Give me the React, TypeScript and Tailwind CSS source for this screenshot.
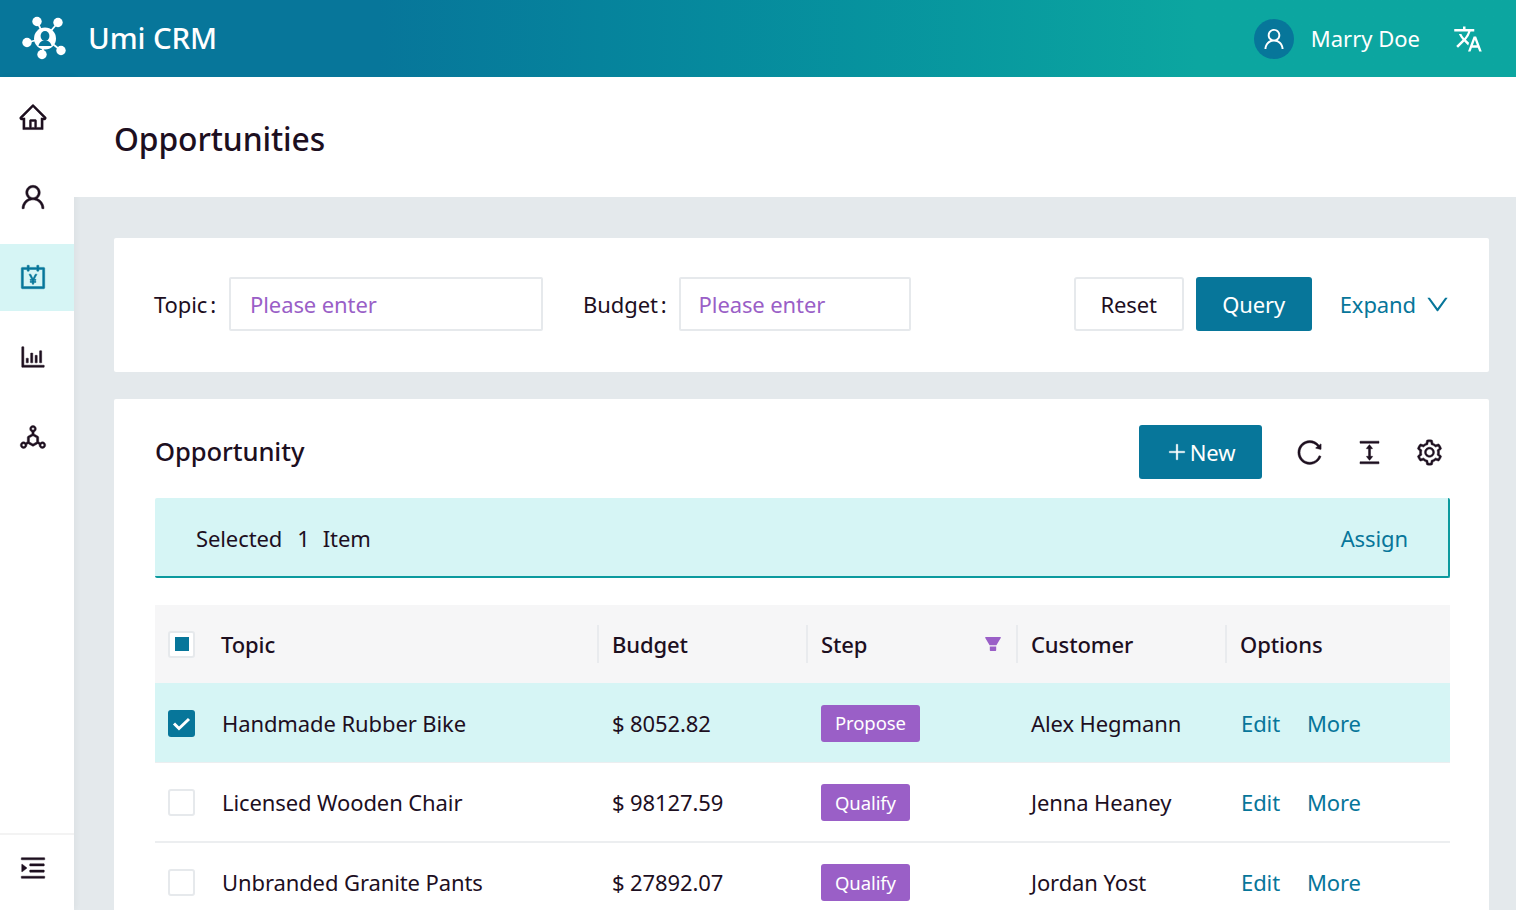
import React from "react";
import {
  AiOutlineHome, AiOutlineUser, AiOutlineAccountBook, AiOutlineBarChart, AiOutlineDeploymentUnit,
  AiOutlineMenuUnfold, AiOutlineReload, AiOutlineColumnHeight, AiOutlineSetting, AiFillFilter,
  AiOutlineDown, AiOutlinePlus,
} from "react-icons/ai";
import { MdTranslate } from "react-icons/md";

const font = { fontFamily: '"Noto Sans", "Open Sans", sans-serif' };

function Logo() {
  return (
    <svg width="46" height="46" viewBox="0 0 46 46" fill="white" stroke="white">
      <g strokeWidth="1.8">
        <line x1="23" y1="22" x2="15" y2="5.5" /><line x1="23" y1="22" x2="36" y2="6.5" />
        <line x1="23" y1="22" x2="5" y2="26.5" /><line x1="23" y1="22" x2="20" y2="38.5" />
        <line x1="23" y1="22" x2="39" y2="34.5" />
      </g>
      <circle cx="15" cy="5.5" r="4.7" stroke="none" /><circle cx="36" cy="6.5" r="4.7" stroke="none" />
      <circle cx="5" cy="26.5" r="4.7" stroke="none" /><circle cx="20" cy="38.5" r="4.7" stroke="none" />
      <circle cx="39" cy="34.5" r="4.7" stroke="none" />
      <circle cx="23" cy="22.5" r="11" stroke="none" />
      <ellipse cx="23" cy="20" rx="4.4" ry="5" fill="#07769a" stroke="none" />
      <path d="M16.5 30c.5-3.5 3-5.5 6.5-5.5s6 2 6.5 5.5z" fill="#07769a" stroke="none" />
    </svg>
  );
}

const rowGrid = "grid grid-cols-[53px_390px_209px_210px_209px_224px] items-center";
const headGrid = "grid grid-cols-[52px_390px_209px_210px_209px_225px] items-center";
const ink = { stroke: "currentColor", strokeWidth: 16 };

function Checkbox({ state }: { state: "none" | "some" | "all" }) {
  if (state === "all") {
    return (
      <span className="flex h-[27px] w-[27px] items-center justify-center rounded-[3px] bg-[#07769a]">
        <svg width="19" height="15" viewBox="0 0 19 15" fill="none" stroke="white" strokeWidth="3"><path d="M2 7.5l5 5L17 3" /></svg>
      </span>
    );
  }
  return (
    <span className="flex h-[27px] w-[27px] items-center justify-center rounded-[3px] border-2 border-[#e6e9ec] bg-white">
      {state === "some" && <span className="h-[14px] w-[14px] bg-[#07769a]" />}
    </span>
  );
}

const rows = [
  { topic: "Handmade Rubber Bike", budget: "$ 8052.82", step: "Propose", customer: "Alex Hegmann", selected: true },
  { topic: "Licensed Wooden Chair", budget: "$ 98127.59", step: "Qualify", customer: "Jenna Heaney", selected: false },
  { topic: "Unbranded Granite Pants", budget: "$ 27892.07", step: "Qualify", customer: "Jordan Yost", selected: false },
];

function Th({ label, icon }: { label: string; icon?: React.ReactNode }) {
  return (
    <div className="flex h-[38px] items-center justify-between border-l-2 border-[#e9ebee] pl-[13px] pr-[13px] font-medium text-[#1d0f1f]">
      <span>{label}</span>
      {icon}
    </div>
  );
}

function NavItem({ children, active }: { children: React.ReactNode; active?: boolean }) {
  return (
    <div className={active ? "flex h-[67px] items-center bg-[#d6f5f5] pb-[2px] pl-[18px] text-[#07769a]" : "flex h-[67px] items-center pb-[2px] pl-[18px] text-[#1d0f1f]"}>
      {children}
    </div>
  );
}

export default function App() {
  return (
    <div style={font} className="flex h-[910px] w-[1516px] flex-col overflow-hidden bg-[#e4e9ec] text-[22px] tracking-[-0.1px] text-[#1d0f1f]">
      <header className="flex h-[77px] shrink-0 items-center bg-gradient-to-r from-[#07769a] from-[25%] to-[#0ca6a0] to-[79%] pl-[22px] pr-[33px] text-white">
        <Logo />
        <span className="ml-[20px] pb-[2px] text-[29.5px] font-medium leading-none">Umi CRM</span>
        <span className="ml-auto flex h-[40px] w-[40px] items-center justify-center rounded-full bg-[#07769a]">
          <AiOutlineUser size={26} />
        </span>
        <span className="ml-[17px] tracking-normal">Marry Doe</span>
        <MdTranslate size={30} className="ml-[33px]" />
      </header>

      <div className="flex min-h-0 flex-1">
        <aside className="flex w-[74px] shrink-0 flex-col bg-white shadow-[2px_0_6px_rgba(0,0,0,0.04)]">
          <nav className="flex flex-col gap-[13px] pt-[7px]">
            <NavItem><AiOutlineHome size={30} {...ink} /></NavItem>
            <NavItem><AiOutlineUser size={30} {...ink} /></NavItem>
            <NavItem active><AiOutlineAccountBook size={30} {...ink} /></NavItem>
            <NavItem><AiOutlineBarChart size={30} {...ink} /></NavItem>
            <NavItem><AiOutlineDeploymentUnit size={30} {...ink} /></NavItem>
          </nav>
          <div className="mt-auto flex h-[77px] items-center border-t-2 border-[#f3f3f3] pb-[10px] pl-[18px]">
            <AiOutlineMenuUnfold size={30} {...ink} />
          </div>
        </aside>

        <main className="min-w-0 flex-1">
          <div className="flex h-[120px] items-center bg-white pl-[40px] pt-[3px] text-[31.8px] font-medium">Opportunities</div>

          <div className="pl-[40px] pr-[27px] pt-[41px]">
            <section className="flex h-[134px] items-center rounded-[2px] bg-white pb-[2px] pl-[40px] pr-[38px]">
              <span>Topic<span className="ml-[3px]">:</span></span>
              <div className="ml-[13px] flex h-[54px] w-[314px] items-center rounded-[2px] border-2 border-[#e6e9ec] pl-[19px] text-[#9a5fc7]">Please enter</div>
              <span className="ml-[40px]">Budget<span className="ml-[3px]">:</span></span>
              <div className="ml-[12px] flex h-[54px] w-[232px] items-center rounded-[2px] border-2 border-[#e6e9ec] pl-[18px] text-[#9a5fc7]">Please enter</div>
              <div className="ml-auto flex h-[54px] w-[110px] items-center justify-center rounded-[3px] border-2 border-[#e6e9ec]">Reset</div>
              <div className="ml-[12px] flex h-[54px] w-[116px] items-center justify-center rounded-[3px] bg-[#07769a] text-white">Query</div>
              <span className="ml-[28px] text-[#07769a]">Expand</span>
              <AiOutlineDown size={27} className="ml-[8px] text-[#07769a]" />
            </section>

            <section className="mt-[27px] rounded-t-[2px] bg-white pl-[41px] pr-[39px]">
              <div className="flex h-[99px] items-center pt-[6px]">
                <span className="pt-[2px] text-[25.6px] font-medium">Opportunity</span>
                <div className="ml-auto flex h-[54px] w-[123px] items-center justify-center gap-[2px] rounded-[3px] bg-[#07769a] text-white">
                  <AiOutlinePlus size={22} {...ink} /><span className="pt-[1px]">New</span>
                </div>
                <AiOutlineReload size={29} className="ml-[33px] mt-[1px]" {...ink} />
                <AiOutlineColumnHeight size={29} className="ml-[31px] mt-[1px]" {...ink} />
                <AiOutlineSetting size={29} className="ml-[31px] mr-[6px] mt-[1px]" {...ink} />
              </div>

              <div className="flex h-[80px] items-center rounded-[2px] border-b-2 border-r-2 border-[#0c9a9e] bg-[#d6f5f5] pl-[41px] pr-[40px] pt-[3px]">
                <span>Selected</span>
                <span className="ml-[15px]">1</span>
                <span className="ml-[13px]">Item</span>
                <span className="ml-auto text-[#07769a]">Assign</span>
              </div>

              <div className={`${headGrid} mt-[27px] h-[78px] bg-[#f6f6f7]`}>
                <div className="pl-[13px]"><Checkbox state="some" /></div>
                <div className="pl-[14px] font-medium">Topic</div>
                <Th label="Budget" />
                <Th label="Step" icon={<AiFillFilter size={20} className="text-[#9a5fc7]" />} />
                <Th label="Customer" />
                <Th label="Options" />
              </div>

              {rows.map((r) => (
                <div key={r.topic} className={r.selected ? `${rowGrid} h-[80px] border-b border-[#eceef0] bg-[#d6f5f5] pt-[1px]` : `${rowGrid} h-[80px] border-b-2 border-[#eceef0] pt-[1px]`}>
                  <div className="pl-[13px]"><Checkbox state={r.selected ? "all" : "none"} /></div>
                  <div className="pl-[14px]">{r.topic}</div>
                  <div className="pl-[14px]">{r.budget}</div>
                  <div className="flex pl-[14px]">
                    <span className="flex h-[37px] items-center rounded-[3px] bg-[#9a5fc7] px-[14px] text-[18.5px] text-white">{r.step}</span>
                  </div>
                  <div className="pl-[14px]">{r.customer}</div>
                  <div className="flex gap-[27px] pl-[15px] text-[#07769a]"><span>Edit</span><span>More</span></div>
                </div>
              ))}
            </section>
          </div>
        </main>
      </div>
    </div>
  );
}
